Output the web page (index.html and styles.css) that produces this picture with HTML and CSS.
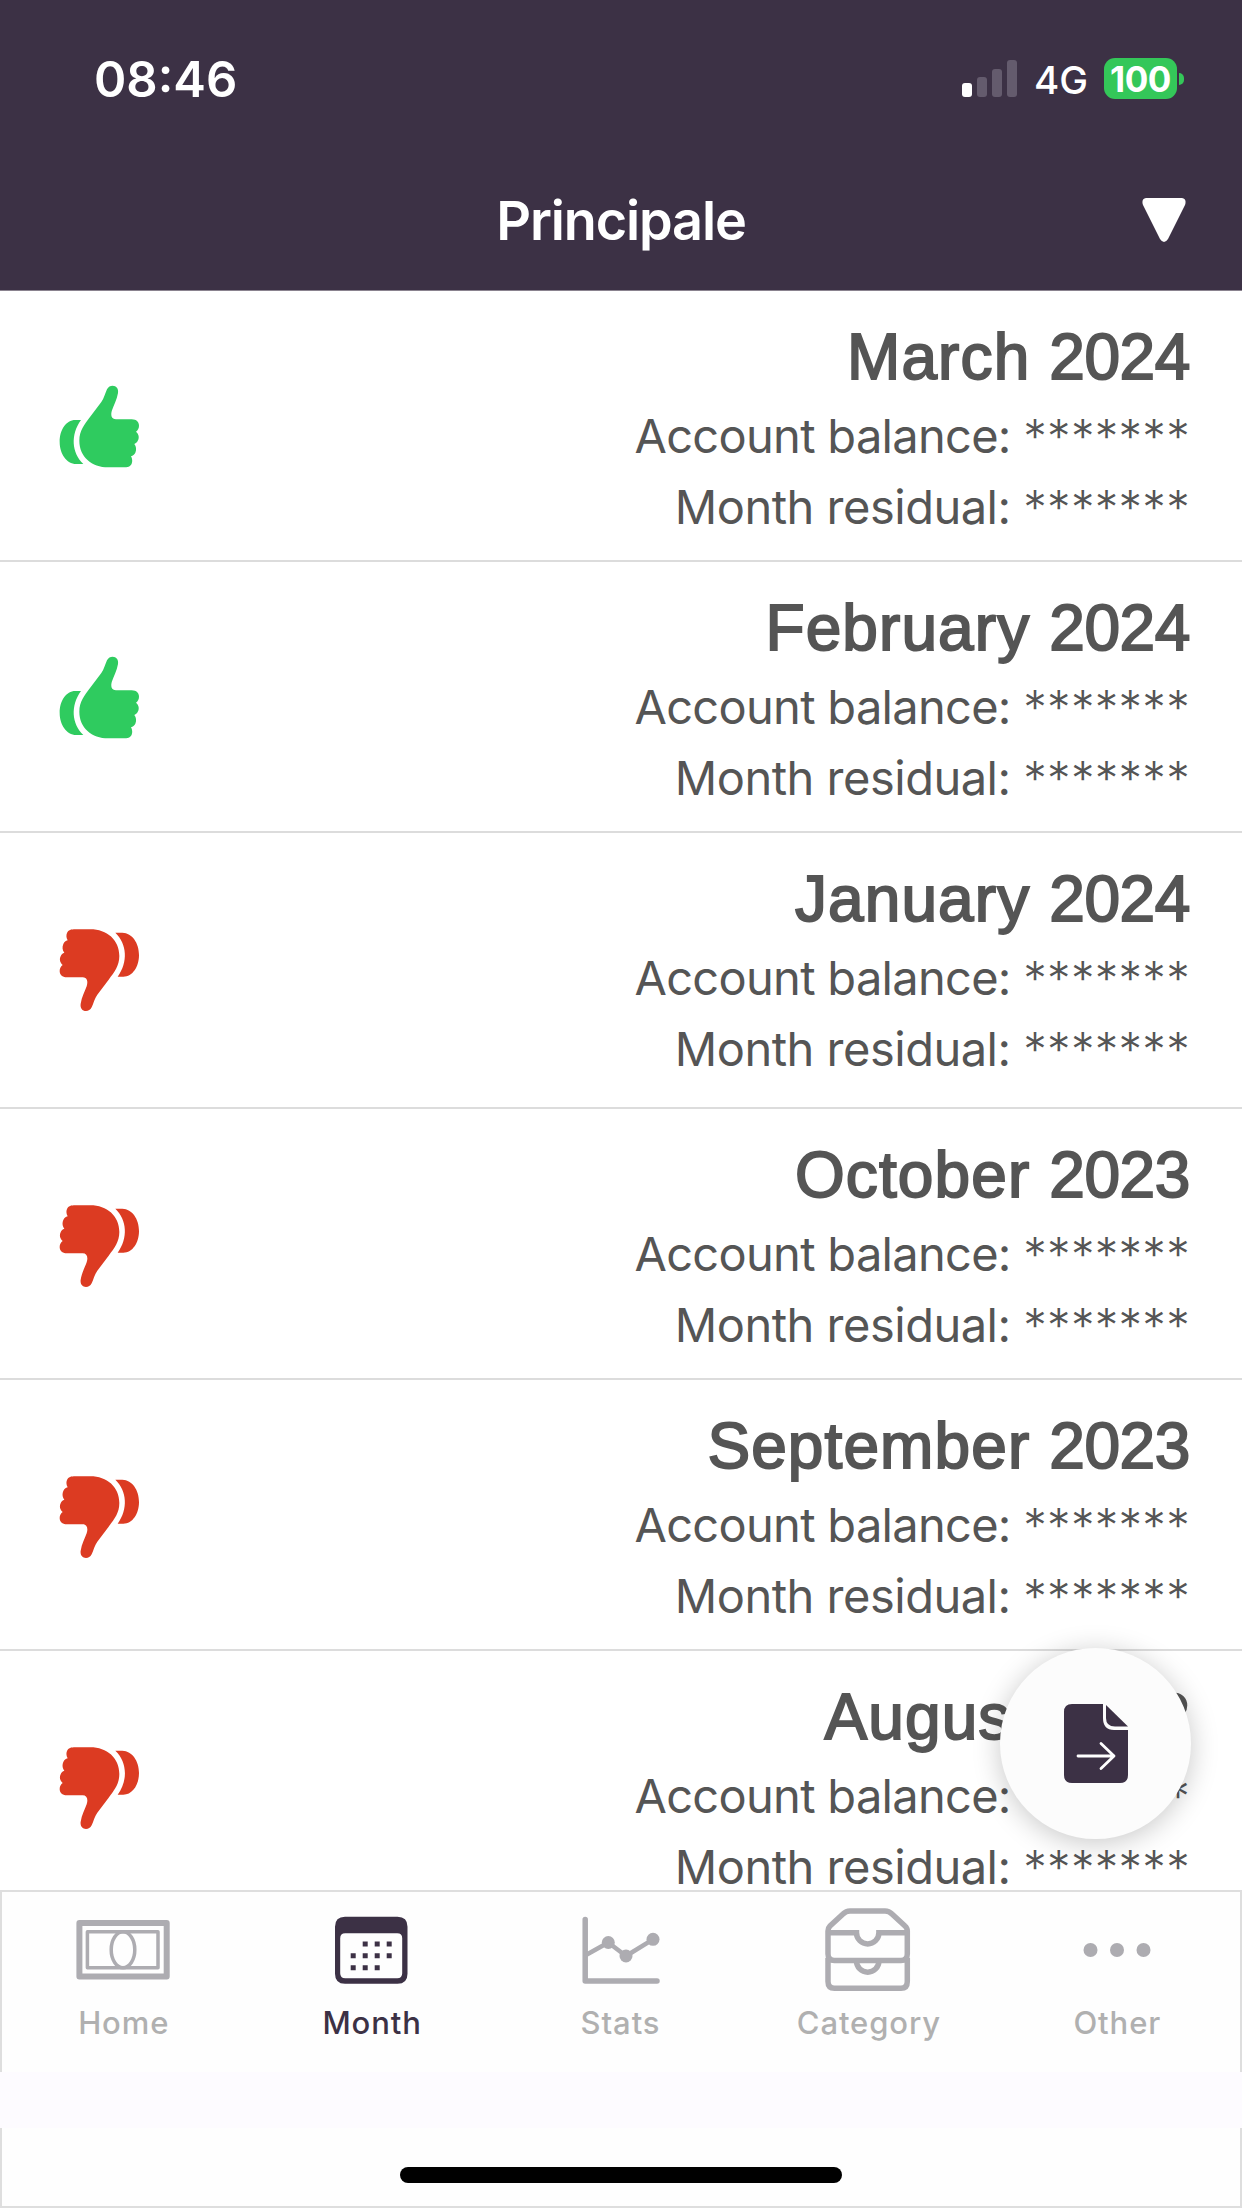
FILE: index.html
```
<!DOCTYPE html>
<html lang="en">
<head>
<meta charset="utf-8">
<title>Months</title>
<link rel="stylesheet" href="styles.css">
</head>
<body>
<svg class="sprite" aria-hidden="true">
  <symbol id="thumb-up" viewBox="0 0 360 360">
    <path fill="currentColor" d="M218 47C229 47 236 56 234 69C231 88 221 107 216 121C211 136 215 148 228 148H275C290 148 297 157 297 167C297 175 293 181 288 185C297 193 298 203 294 211C292 217 288 220 283 222C289 229 290 240 286 248C283 254 279 257 273 259C277 266 278 274 275 281C271 290 263 292 250 292H205C155 292 118 260 118 212C118 182 133 164 150 141L184 96C192 85 196 69 201 58C205 50 211 47 218 47Z"/>
    <path fill="currentColor" d="M123 150H106C78 150 59 180 59 215C59 251 79 281 109 282H130C95 249 91 194 123 150Z"/>
  </symbol>
  <symbol id="thumb-down" viewBox="0 0 360 360">
    <use href="#thumb-up" width="360" height="360" transform="rotate(180 178 175)"/>
  </symbol>
</svg>
<div class="phone">
  <header class="header">
    <div class="status">
      <div class="time">08:46</div>
      <div class="indicators">
        <div class="signal"><i class="on"></i><i></i><i></i><i></i></div>
        <span class="network">4G</span>
        <div class="battery"><span>100</span></div>
        <i class="battery-tip"></i>
      </div>
    </div>
    <div class="navbar">
      <h1>Principale</h1>
      <svg class="caret" viewBox="0 0 44 46"><path fill="#fff" d="M4 1H40Q45 2 43 8L26 42Q22 48 18 42L1 8Q-1 2 4 1Z"/></svg>
    </div>
  </header>

  <main class="list">
    <section class="row up"><svg><use href="#thumb-up"/></svg><div class="info"><h2>March <span>2024</span></h2><p>Account balance: <b>*******</b></p><p class="second">Month residual: <b>*******</b></p></div></section>
    <section class="row up"><svg><use href="#thumb-up"/></svg><div class="info"><h2>February <span>2024</span></h2><p>Account balance: <b>*******</b></p><p class="second">Month residual: <b>*******</b></p></div></section>
    <section class="row down year-end"><svg><use href="#thumb-down"/></svg><div class="info"><h2>January <span>2024</span></h2><p>Account balance: <b>*******</b></p><p class="second">Month residual: <b>*******</b></p></div></section>
    <section class="row down"><svg><use href="#thumb-down"/></svg><div class="info"><h2>October <span>2023</span></h2><p>Account balance: <b>*******</b></p><p class="second">Month residual: <b>*******</b></p></div></section>
    <section class="row down"><svg><use href="#thumb-down"/></svg><div class="info"><h2>September <span>2023</span></h2><p>Account balance: <b>*******</b></p><p class="second">Month residual: <b>*******</b></p></div></section>
    <section class="row down last"><svg><use href="#thumb-down"/></svg><div class="info"><h2>August <span>2023</span></h2><p>Account balance: <b>*******</b></p><p class="second">Month residual: <b>*******</b></p></div></section>
  </main>

  <button class="fab" aria-label="Export">
    <svg viewBox="0 0 66 80">
      <path fill="#3c3145" d="M9 0H40V14Q40 26 51 26H65V71Q65 79 57 79H9Q1 79 1 71V8Q1 0 9 0Z"/>
      <path fill="#3c3145" d="M43 1L65 22.500H52Q43 22.500 43 14Z"/>
      <path fill="none" stroke="#fff" stroke-width="2.800" stroke-linecap="round" stroke-linejoin="round" d="M15 52H51M38 39.500L51 52L38 64.500"/>
    </svg>
  </button>

  <nav class="tabs">
    <div class="tab">
      <svg viewBox="0 0 100 90"><g fill="none" stroke="currentColor" stroke-linejoin="round"><rect x="6.400" y="18" width="87.300" height="53.500" stroke-width="6"/><rect x="14.400" y="26.700" width="70.600" height="36" stroke-width="3.500"/><ellipse cx="50" cy="44.700" rx="11.800" ry="18" stroke-width="3.500"/></g></svg>
      <span>Home</span>
    </div>
    <div class="tab active">
      <svg viewBox="0 0 100 90"><path fill="currentColor" fill-rule="evenodd" d="M24 11.700H76.500Q86.500 11.700 86.500 21.700V68.700Q86.500 78.700 76.500 78.700H24Q14 78.700 14 68.700V21.700Q14 11.700 24 11.700ZM24.200 28.300Q19.200 28.300 19.200 33.300V68.300Q19.200 73.300 24.200 73.300H76.200Q81.200 73.300 81.200 68.300V33.300Q81.200 28.300 76.200 28.300Z"/><path stroke="currentColor" stroke-width="5" stroke-dasharray="5 7" d="M41.700 39H71M29.700 50.700H71M29.700 62.700H59"/></svg>
      <span>Month</span>
    </div>
    <div class="tab">
      <svg viewBox="0 0 100 90"><g fill="none" stroke="currentColor" stroke-linecap="round" stroke-linejoin="round"><path stroke-width="5.500" d="M15.200 14.500V76H87"/><path stroke-width="4.500" d="M16 50L38.300 37.500L56 51L83 34.300"/></g><g fill="currentColor"><circle cx="38.300" cy="37.500" r="6.500"/><circle cx="56" cy="51" r="6.500"/><circle cx="83" cy="34.300" r="6.500"/></g></svg>
      <span>Stats</span>
    </div>
    <div class="tab">
      <svg viewBox="0 0 100 90"><g fill="none" stroke="currentColor" stroke-width="5.500" transform="translate(-1 0)"><path d="M11 49V26Q11 23 13 21L26 9Q29 6 33 6H68Q72 6 75 9L88 21Q90.300 23 90.300 26V49Q90.300 55.500 84 55.500H17.500Q11 55.500 11 49Z"/><path d="M11 53V76.500Q11 83.300 17.500 83.300H84Q90.300 83.300 90.300 76.500V53"/><path d="M11 27.700H39.500A11.200 11.200 0 0 0 61.900 27.700H90.300"/><path d="M39.500 56A11.200 11.200 0 0 0 61.900 56"/></g></svg>
      <span>Category</span>
    </div>
    <div class="tab">
      <svg viewBox="0 0 100 90"><g fill="currentColor"><circle cx="24.500" cy="45" r="7"/><circle cx="51" cy="45" r="7"/><circle cx="77.500" cy="45" r="7"/></g></svg>
      <span>Other</span>
    </div>
  </nav>
  <div class="band"></div>
  <footer class="home-area"><div class="home-bar"></div></footer>
</div>
</body>
</html>
```
FILE: styles.css
```
* { box-sizing: border-box; }
body { margin: 0; background: #fff; font-family: Inter, "Liberation Sans", sans-serif; }
h1, h2, p { margin: 0; }
.sprite { display: none; }

.phone { position: relative; width: 1242px; height: 2208px; overflow: hidden; display: flex; flex-direction: column; background: #fefefe; }

.header { flex: none; height: 291px; border-bottom: 1px solid #8a838f; background: #3c3145; color: #fff; }
.status { display: flex; justify-content: space-between; height: 160px; padding: 50px 58px 0 94px; }
.time { font-size: 49px; line-height: 59px; font-weight: 600; letter-spacing: 0; }
.indicators { display: flex; height: 56px; }
.signal { display: flex; align-items: flex-end; gap: 5px; height: 47px; width: 55px; margin-right: 17px; }
.signal i { width: 10px; border-radius: 3px; background: #645b6d; height: 37px; }
.signal i:nth-child(1) { height: 14px; background: #fff; }
.signal i:nth-child(2) { height: 20px; }
.signal i:nth-child(3) { height: 28px; }
.network { width: 70px; font-size: 38.500px; line-height: 61px; font-weight: 500; }
.battery { width: 73px; height: 41px; margin-top: 8px; border-radius: 11px; background: #34c759; text-align: center; font-size: 35px; line-height: 42px; font-weight: 700; letter-spacing: -0.500px; }
.battery-tip { width: 5px; height: 12px; margin: 23px 0 0 2px; border-radius: 0 6px 6px 0; background: #34c759; }
.navbar { display: grid; grid-template-columns: 1fr auto 1fr; height: 130px; padding-right: 56px; padding-left: 56px; }
.navbar h1 { grid-column: 2; margin-top: 28px; font-size: 54px; line-height: 66px; font-weight: 600; letter-spacing: -1.150px; }
.caret { width: 44px; height: 46px; margin-top: 37px; justify-self: end; }

.list { flex: none; height: 1599px; overflow: hidden; background: #fff; }
.row { display: flex; justify-content: space-between; height: 271px; padding-right: 52px; padding-left: 40px; border-bottom: 2px solid #dcdcdc; color: #555; }
.row.year-end { height: 276px; }
.row.last { height: 239px; border-bottom: 0; }
.row svg { width: 120px; height: 120px; margin-top: 79px; }
.row.up svg { color: #2fcb5f; }
.row.down svg { color: #dc3b22; margin-top: 77px; }
.info { text-align: right; padding-top: 30px; }
.info h2 { font: 400 64px/72px "Liberation Sans", Arial, sans-serif; letter-spacing: 1.100px; -webkit-text-stroke: 1.900px #555; }
.info h2 span { letter-spacing: -0.400px; }
.info p { font-size: 47px; line-height: 56px; margin-top: 15px; white-space: nowrap; letter-spacing: -0.700px; }
.info .second { letter-spacing: -0.500px; }
.info b { font-weight: 300; letter-spacing: 0.300px; }

.fab { position: absolute; left: 1000px; top: 1648px; width: 191px; height: 191px; padding: 0; border: 0; border-radius: 50%; background: #fcfcfc; box-shadow: 0 4px 28px rgba(0, 0, 0, .22); display: grid; place-items: center; }
.fab svg { width: 66px; height: 80px; }

.tabs { flex: none; display: grid; grid-template-columns: repeat(5, 248.400px); justify-content: center; height: 182px; padding-right: 3px; border: 2px solid #dedede; border-bottom: 0; background: #fefefe; color: #adacb1; }
.tab { display: flex; flex-direction: column; align-items: center; padding-top: 13px; }
.tab svg { width: 100px; height: 90px; }
.tab span { margin-top: 9px; padding-left: 2px; font-size: 31px; line-height: 38px; font-weight: 500; letter-spacing: 0.900px; color: #b0b0b0; }
.tab.active, .tab.active span { color: #3c3145; }
.band { flex: none; height: 56px; background: #fdfbff; }
.home-area { flex: 1; padding-top: 39px; border: 2px solid #dedede; border-top: 0; }
.home-bar { width: 442px; height: 16px; margin: 0 auto; border-radius: 8px; background: #000; }
```
